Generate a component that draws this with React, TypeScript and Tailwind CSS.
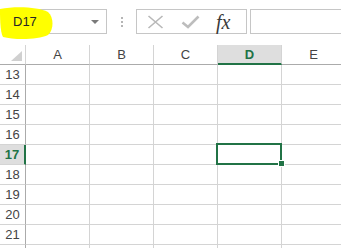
const COLS = ["A", "B", "C", "D", "E"];
const ROWS = [13, 14, 15, 16, 17, 18, 19, 20, 21];
const ACTIVE_COL = "D";
const ACTIVE_ROW = 17;

function NameBox() {
  return (
    <div className="flex h-[25px] w-[101px] shrink-0 items-center justify-between border border-[#c6c6c6] bg-white pl-[6px] pr-[7px]">
      <span className="relative z-10 text-[13px] text-[#262626]">D17</span>
      <span className="relative z-10 h-0 w-0 border-x-[4px] border-t-[4px] border-x-transparent border-t-[#7a7a7a]" />
    </div>
  );
}

function FormulaBar() {
  return (
    <div className="flex shrink-0 items-center">
      <div className="ml-[14px] mr-[13px] flex flex-col gap-[2px]">
        <span className="h-[2px] w-[2px] bg-[#b5b5b5]" />
        <span className="h-[2px] w-[2px] bg-[#b5b5b5]" />
        <span className="h-[2px] w-[2px] bg-[#b5b5b5]" />
      </div>
      <div className="flex h-[25px] w-[111px] shrink-0 items-center border border-[#c6c6c6] bg-white">
        {/* cancel */}
        <svg className="ml-[10px] shrink-0" width="17" height="14" viewBox="0 0 17 14">
          <path d="M1.5 1 L15.5 13 M15.5 1 L1.5 13" stroke="#b8b8b8" strokeWidth="1.6" fill="none" />
        </svg>
        {/* enter */}
        <svg className="ml-[17px] shrink-0" width="19" height="14" viewBox="0 0 19 14">
          <path d="M1.5 7.5 L7 12 L17.5 1.5" stroke="#bdbdbd" strokeWidth="2.6" fill="none" />
        </svg>
        <span className="ml-[16px] font-['Liberation_Serif',serif] text-[20px] italic leading-none text-[#3a3a3a]">fx</span>
      </div>
      <div className="ml-[3px] h-[25px] w-[100px] shrink-0 border border-[#c6c6c6] bg-white" />
    </div>
  );
}

function Highlight() {
  return (
    <svg className="absolute left-0 top-0" width="56" height="42" viewBox="0 0 56 42">
      <path
        d="M0 9 C 16 6, 38 7, 48 12 C 54 17, 54 30, 48 35 C 38 40, 14 40, 3 37 C 0 32, 0 16, 0 9 Z"
        fill="#ffff00"
      />
    </svg>
  );
}

export default function App() {
  return (
    <div className="h-[248px] w-[341px] overflow-hidden bg-white font-['Liberation_Sans',sans-serif]">
      {/* Top: name box + formula bar */}
      <div className="relative flex h-[45px] items-start pl-[6px] pt-[9px]">
        <Highlight />
        <NameBox />
        <FormulaBar />
      </div>

      {/* Sheet grid */}
      <div className="grid grid-cols-[26px_64px_64px_64px_64px_64px] text-[13px] text-[#444]">
        <div className="relative h-[20px] border-b border-r border-b-[#ababab] border-r-[#d4d4d4]">
          <svg className="absolute bottom-[3px] right-[3px]" width="11" height="10" viewBox="0 0 11 10">
            <path d="M11 0 L11 10 L0 10 Z" fill="#d0d0d0" />
          </svg>
        </div>
        {COLS.map((c) =>
          c === ACTIVE_COL ? (
            <div key={c} className="flex h-[20px] items-center justify-center border-b-2 border-r border-b-[#217346] border-r-[#d4d4d4] bg-[#dedede] pt-[1px] font-bold text-[#217346]">
              {c}
            </div>
          ) : (
            <div key={c} className="flex h-[20px] items-center justify-center border-b border-r border-b-[#ababab] border-r-[#d4d4d4]">
              {c}
            </div>
          )
        )}

        {ROWS.map((r) => (
          <div key={r} className="contents">
            {r === ACTIVE_ROW ? (
              <div className="flex h-[20px] items-center justify-center border-b border-r-2 border-b-[#d4d4d4] border-r-[#217346] bg-[#dedede] font-bold text-[#217346]">
                {r}
              </div>
            ) : (
              <div className="flex h-[20px] items-center justify-center border-b border-r border-b-[#d4d4d4] border-r-[#ababab]">
                {r}
              </div>
            )}
            {COLS.map((c) => (
              <div key={c} className="relative h-[20px] border-b border-r border-[#d4d4d4]">
                {r === ACTIVE_ROW && c === ACTIVE_COL && (
                  <div className="absolute -bottom-[1px] -left-[2px] -right-[1px] -top-[2px] z-10 border-2 border-[#217346]">
                    <span className="absolute -bottom-[4px] -right-[5px] h-[7px] w-[7px] border border-white bg-[#217346]" />
                  </div>
                )}
              </div>
            ))}
          </div>
        ))}

        {/* partial row below 21 */}
        <div className="h-[20px] border-r border-r-[#ababab]" />
        {COLS.map((c) => (
          <div key={c} className="h-[20px] border-r border-[#d4d4d4]" />
        ))}
      </div>
    </div>
  );
}
